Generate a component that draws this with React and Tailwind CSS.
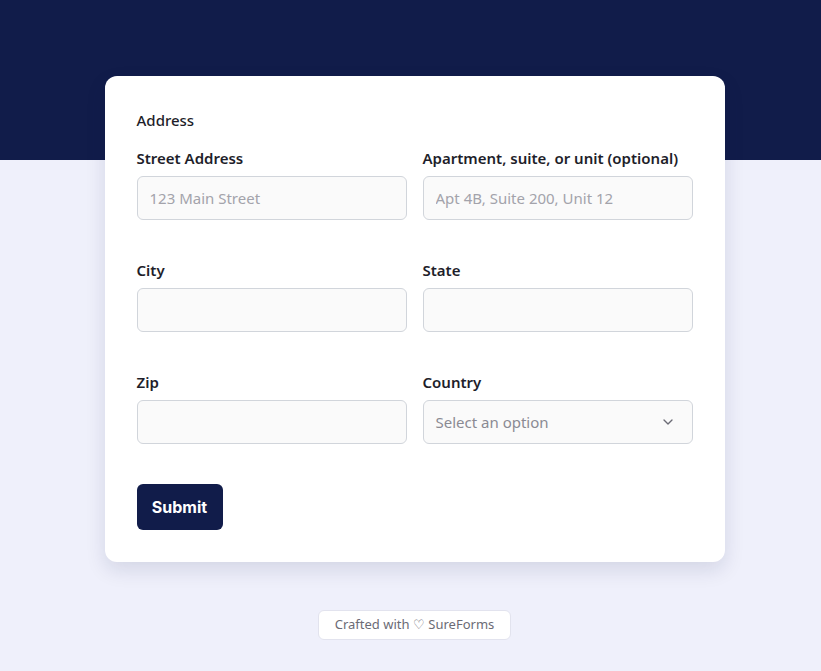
import React from 'react';
import { ChevronDown } from 'lucide-react';

const Field = ({ label, placeholder }) => (
    <div className="flex flex-col gap-2">
        <label className="text-[15px] leading-5 font-semibold text-[#1e1e2a]">{label}</label>
        <input
            placeholder={placeholder}
            className="h-11 w-full rounded-md border border-[#d1d5db] bg-[#fafafa] px-3 text-[15px] text-[#1e1e2a] placeholder:text-[#a3a3ab] outline-none"
        />
    </div>
);

export default function App() {
    return (
        <div className="relative min-h-[671px] bg-[#eff0fb] font-['Noto_Sans',sans-serif]">
            <div className="h-40 bg-[#111c4a]" />
            <div className="-mt-[84px] flex flex-col items-center pl-2">
                <div className="w-[620px] rounded-xl bg-white px-8 pt-[34px] pb-8 shadow-[0_8px_20px_rgba(17,28,74,0.12)]">
                    <div className="text-[15px] leading-5 font-medium text-[#1e1e2a]">Address</div>
                    <div className="mt-[18px] grid grid-cols-2 gap-x-4 gap-y-10">
                        <Field label="Street Address" placeholder="123 Main Street" />
                        <Field label="Apartment, suite, or unit (optional)" placeholder="Apt 4B, Suite 200, Unit 12" />
                        <Field label="City" />
                        <Field label="State" />
                        <Field label="Zip" />
                        <div className="flex flex-col gap-2">
                            <label className="text-[15px] leading-5 font-semibold text-[#1e1e2a]">Country</label>
                            <div className="flex h-11 items-center justify-between rounded-md border border-[#d1d5db] bg-[#fafafa] px-3 text-[15px] text-[#8a8a93]">
                                <span>Select an option</span>
                                <ChevronDown className="mr-1 h-4 w-4 text-[#6b6b75]" strokeWidth={2} />
                            </div>
                        </div>
                    </div>
                    <button className="mt-10 h-[46px] w-[86px] rounded-md bg-[#111c4a] text-[16px] font-bold text-white font-['Inter',sans-serif]">
                        Submit
                    </button>
                </div>
                <div className="mt-12 flex h-[30px] items-center rounded-md border border-[#e2e3ee] bg-white px-4 text-[13px] text-[#6b6b75]">
                    Crafted with ♡ SureForms
                </div>
            </div>
        </div>
    );
}
